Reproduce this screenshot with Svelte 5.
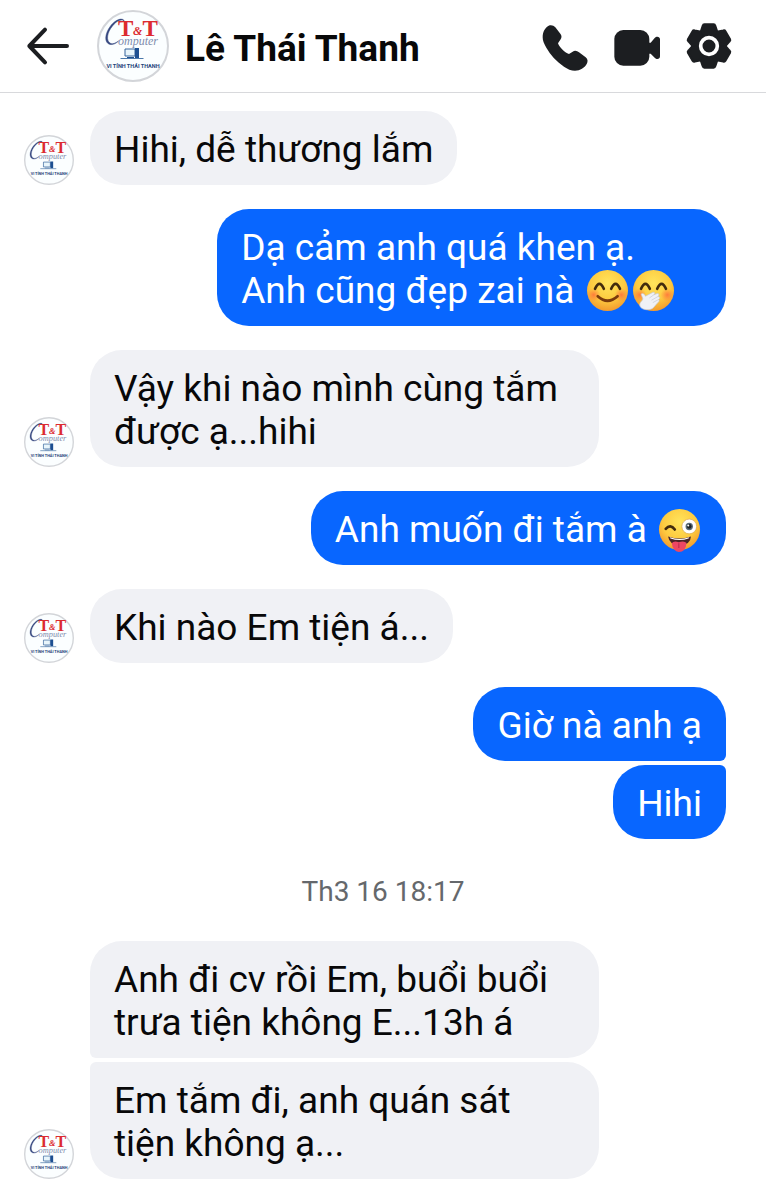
<script lang="ts">
  type Message = { text: string; emojis?: string[] };
  type Group = { mine: boolean; messages: Message[] };

  const name = "Lê Thái Thanh";

  const earlier: Group[] = [
    { mine: false, messages: [{ text: "Hihi, dễ thương lắm" }] },
    {
      mine: true,
      messages: [
        {
          text: "Dạ cảm anh quá khen ạ. Anh cũng đẹp zai nà",
          emojis: ["smile", "giggle"],
        },
      ],
    },
    {
      mine: false,
      messages: [{ text: "Vậy khi nào mình cùng tắm được ạ...hihi" }],
    },
    {
      mine: true,
      messages: [{ text: "Anh muốn đi tắm à", emojis: ["wink"] }],
    },
    { mine: false, messages: [{ text: "Khi nào Em tiện á..." }] },
    { mine: true, messages: [{ text: "Giờ nà anh ạ" }, { text: "Hihi" }] },
  ];

  const later: Group[] = [
    {
      mine: false,
      messages: [
        { text: "Anh đi cv rồi Em, buổi buổi trưa tiện không E...13h á" },
        { text: "Em tắm đi, anh quán sát tiện không ạ..." },
      ],
    },
  ];
</script>

{#snippet logo()}
  <svg viewBox="0 0 144 144" role="img" aria-label={name}>
    <circle cx="72" cy="72" r="70" fill="#fbfeff" stroke="#d3d5d9" stroke-width="4" />
    <path
      d="M55 23C52 14 38 18 27 32C15 48 14 66 26 69C32 70 38 67 43 62C36 67 30 69 26 66C18 61 20 45 31 32C40 20 51 17 55 23Z"
      fill="#34467f"
      stroke="#34467f"
      stroke-width="1"
    />
    <g fill="#dc2b30" font-family="Liberation Serif, serif" font-weight="700">
      <text x="42" y="52" font-size="46">T</text>
      <text x="72" y="50" font-size="24" font-style="italic">&amp;</text>
      <text x="91" y="52" font-size="46">T</text>
    </g>
    <text
      x="42"
      y="70"
      font-family="Liberation Serif, serif"
      font-size="24"
      font-style="italic"
      fill="#7f8dad">omputer</text
    >
    <path d="M56 78H76V92H56Z" fill="#e8f5fb" stroke="#36649b" stroke-width="2" />
    <path d="M76 76H84V96H76ZM60 94H74V96H60Z" fill="#1d4f91" />
    <path d="M47 97H93" stroke="#4b78aa" stroke-width="2" />
    <text
      x="72"
      y="116"
      text-anchor="middle"
      font-family="Roboto, sans-serif"
      font-size="11"
      font-weight="700"
      fill="#1d4178">VI TÍNH THÁI THANH</text
    >
  </svg>
{/snippet}

{#snippet emoji(kind: string)}
  <svg class="emoji" viewBox="0 0 122 122" role="img" aria-label={kind}>
    <defs>
      <radialGradient id="face-{kind}" cx="50%" cy="32%" r="68%">
        <stop offset="0" stop-color="#ffe45c" />
        <stop offset="0.6" stop-color="#fdcb40" />
        <stop offset="1" stop-color="#f39a2e" />
      </radialGradient>
      <radialGradient id="cheek-{kind}">
        <stop offset="0" stop-color="#ff6a3c" stop-opacity="0.8" />
        <stop offset="1" stop-color="#ff7a3c" stop-opacity="0" />
      </radialGradient>
    </defs>
    <circle cx="61" cy="61" r="61" fill="url(#face-{kind})" />
    {#if kind === "wink"}
      <path d="M20 59Q34 43 47 61" class="line" />
      <circle cx="90" cy="52" r="22" fill="#fff" stroke="#d9a54a" stroke-width="2" />
      <circle cx="90" cy="52" r="11" fill="#596b78" />
      <circle cx="90" cy="52" r="7" fill="#1e2428" />
      <circle cx="87" cy="49" r="3" fill="#fff" />
      <path d="M27 82Q61 94 95 82Q94 107 61 109Q31 107 27 82Z" fill="#4b2527" />
      <path d="M32 84Q61 94 90 84L88 88Q61 97 34 88Z" fill="#fff" />
      <path
        d="M38 102Q44 93 59 99Q75 93 82 101Q80 127 59 128Q41 126 38 102Z"
        fill="#ed4763"
      />
      <path d="M59 102V116" stroke="#bd294a" stroke-width="3" />
    {:else}
      <circle cx="20" cy="74" r="20" fill="url(#cheek-{kind})" />
      <circle cx="102" cy="74" r="20" fill="url(#cheek-{kind})" />
      <path d="M24 56Q37 27 50 56M72 56Q85 27 98 56" class="line" />
      {#if kind === "smile"}
        <path d="M32 78Q61 105 91 78" class="line mouth" />
      {:else}
        <path
          d="M24 72C28 67 35 72 37 78L58 67C65 64 67 70 62 74L72 70C79 70 78 76 74 79C81 79 81 85 76 88C80 91 77 96 72 99L60 113C50 122 25 119 21 108C16 96 31 92 29 84Z"
          fill="#f0f1f6"
          stroke="#c4c7d2"
          stroke-width="2"
        />
        <path
          d="M62 74L49 83M74 79L55 90M76 88L59 97"
          fill="none"
          stroke="#c4c7d2"
          stroke-width="2"
        />
      {/if}
    {/if}
  </svg>
{/snippet}

{#snippet thread(groups: Group[])}
  {#each groups as group}
    <div class="group" class:mine={group.mine}>
      {#if !group.mine}
        <div class="avatar">{@render logo()}</div>
      {/if}
      <div class="bubbles">
        {#each group.messages as message}
          <p class="bubble">
            {message.text}
            {#each message.emojis ?? [] as kind}{@render emoji(kind)}{/each}
          </p>
        {/each}
      </div>
    </div>
  {/each}
{/snippet}

<header>
  <button class="back" aria-label="Back">
    <svg viewBox="81 75 126 126">
      <path d="M135 89L88 138L135 187M88 138H201" />
    </svg>
  </button>
  <div class="avatar large">{@render logo()}</div>
  <h1>{name}</h1>
  <nav>
    <button aria-label="Call">
      <svg viewBox="67 69 138 138">
        <path
          d="M69 112C69 94 77 83 87 77C94 74 102 76 107 82L122 101C127 107 126 113 123 118L115 130C120 143 134 157 148 162L159 155C165 151 172 152 178 157L198 172C205 178 205 186 201 192C194 204 182 212 166 212C155 212 143 207 133 200C110 184 92 164 80 143C73 131 69 122 69 112Z"
        />
      </svg>
    </button>
    <button aria-label="Video call">
      <svg viewBox="282 69 138 138">
        <rect x="283" y="90" width="105" height="107" rx="27" />
        <path
          d="M386 128H392L404 114C410 107 420 110 420 118V169C420 178 410 180 404 173L392 161H386Z"
        />
      </svg>
    </button>
    <button aria-label="Settings">
      <svg viewBox="-69 -69 138 138">
        <circle r="53" />
        {#each [0, 60, 120, 180, 240, 300] as angle}
          <path
            class="tooth"
            d="M-14 -64H14Q17 -64 18 -60L23 -45L0 -20L-23 -45L-18 -60Q-17 -64 -14 -64Z"
            transform="rotate({angle})"
          />
        {/each}
        <circle class="ring" r="25" />
      </svg>
    </button>
  </nav>
</header>

<main>
  {@render thread(earlier)}
  <time>Th3 16 18:17</time>
  {@render thread(later)}
</main>

<style>
  :global(body) {
    margin: 0;
    background: #fff;
    color: #080809;
    font-family: Roboto, "Noto Sans", sans-serif;
  }

  svg {
    display: block;
    width: 100%;
  }

  header {
    display: flex;
    align-items: center;
    height: 92px;
    padding: 0 34px 0 27px;
    border-bottom: 1px solid #d8d9dc;
  }

  button {
    width: 46px;
    padding: 0;
    border: none;
    background: none;
    color: #1c1e21;
    cursor: pointer;
  }

  button svg {
    fill: currentColor;
    overflow: visible;
  }

  .back {
    width: 42px;
    margin-right: 28px;
  }

  .back path {
    fill: none;
    stroke: currentColor;
    stroke-width: 12;
    stroke-linecap: round;
    stroke-linejoin: round;
  }

  .tooth {
    stroke: currentColor;
    stroke-width: 8;
    stroke-linejoin: round;
  }

  .ring {
    stroke: #fff;
    stroke-width: 11;
  }

  h1 {
    flex: 1;
    margin: 6px 0 0 16px;
    font-size: 37px;
    font-weight: 700;
    line-height: 44px;
  }

  nav {
    display: flex;
    gap: 26px;
  }

  .avatar {
    flex: none;
    width: 50px;
  }

  .avatar.large {
    width: 72px;
  }

  main {
    display: flex;
    flex-direction: column;
    gap: 24px;
    padding: 18px 0 20px;
  }

  .group {
    display: flex;
    align-items: flex-end;
    gap: 16px;
    padding: 0 40px 0 24px;
  }

  .group.mine {
    padding-left: 90px;
  }

  .bubbles {
    display: flex;
    flex: 1;
    flex-direction: column;
    align-items: flex-start;
    gap: 4px;
  }

  .mine .bubbles {
    align-items: flex-end;
  }

  .bubble {
    box-sizing: border-box;
    max-width: 80%;
    margin: 0;
    padding: 17px 24px 14px;
    border-radius: 32px;
    background: #f0f1f5;
    font-size: 37px;
    line-height: 43px;
  }

  .mine .bubble {
    background: #0866ff;
    color: #fff;
  }

  .bubble:not(:last-child) {
    border-bottom-left-radius: 6px;
  }

  .bubble:not(:first-child) {
    border-top-left-radius: 6px;
  }

  .mine .bubble:not(:last-child) {
    border-radius: 32px 32px 6px 32px;
  }

  .mine .bubble:not(:first-child) {
    border-radius: 32px 6px 32px 32px;
  }

  .emoji {
    display: inline-block;
    width: 41px;
    height: 41px;
    margin: 0 2px 0 3px;
    overflow: visible;
    vertical-align: -8px;
  }

  .line {
    fill: none;
    stroke: #422b0d;
    stroke-width: 8;
    stroke-linecap: round;
  }

  .mouth {
    stroke: #7a3a0c;
  }

  time {
    align-self: center;
    margin: 14px 0 10px;
    color: #65686c;
    font-size: 28px;
    line-height: 30px;
  }
</style>
